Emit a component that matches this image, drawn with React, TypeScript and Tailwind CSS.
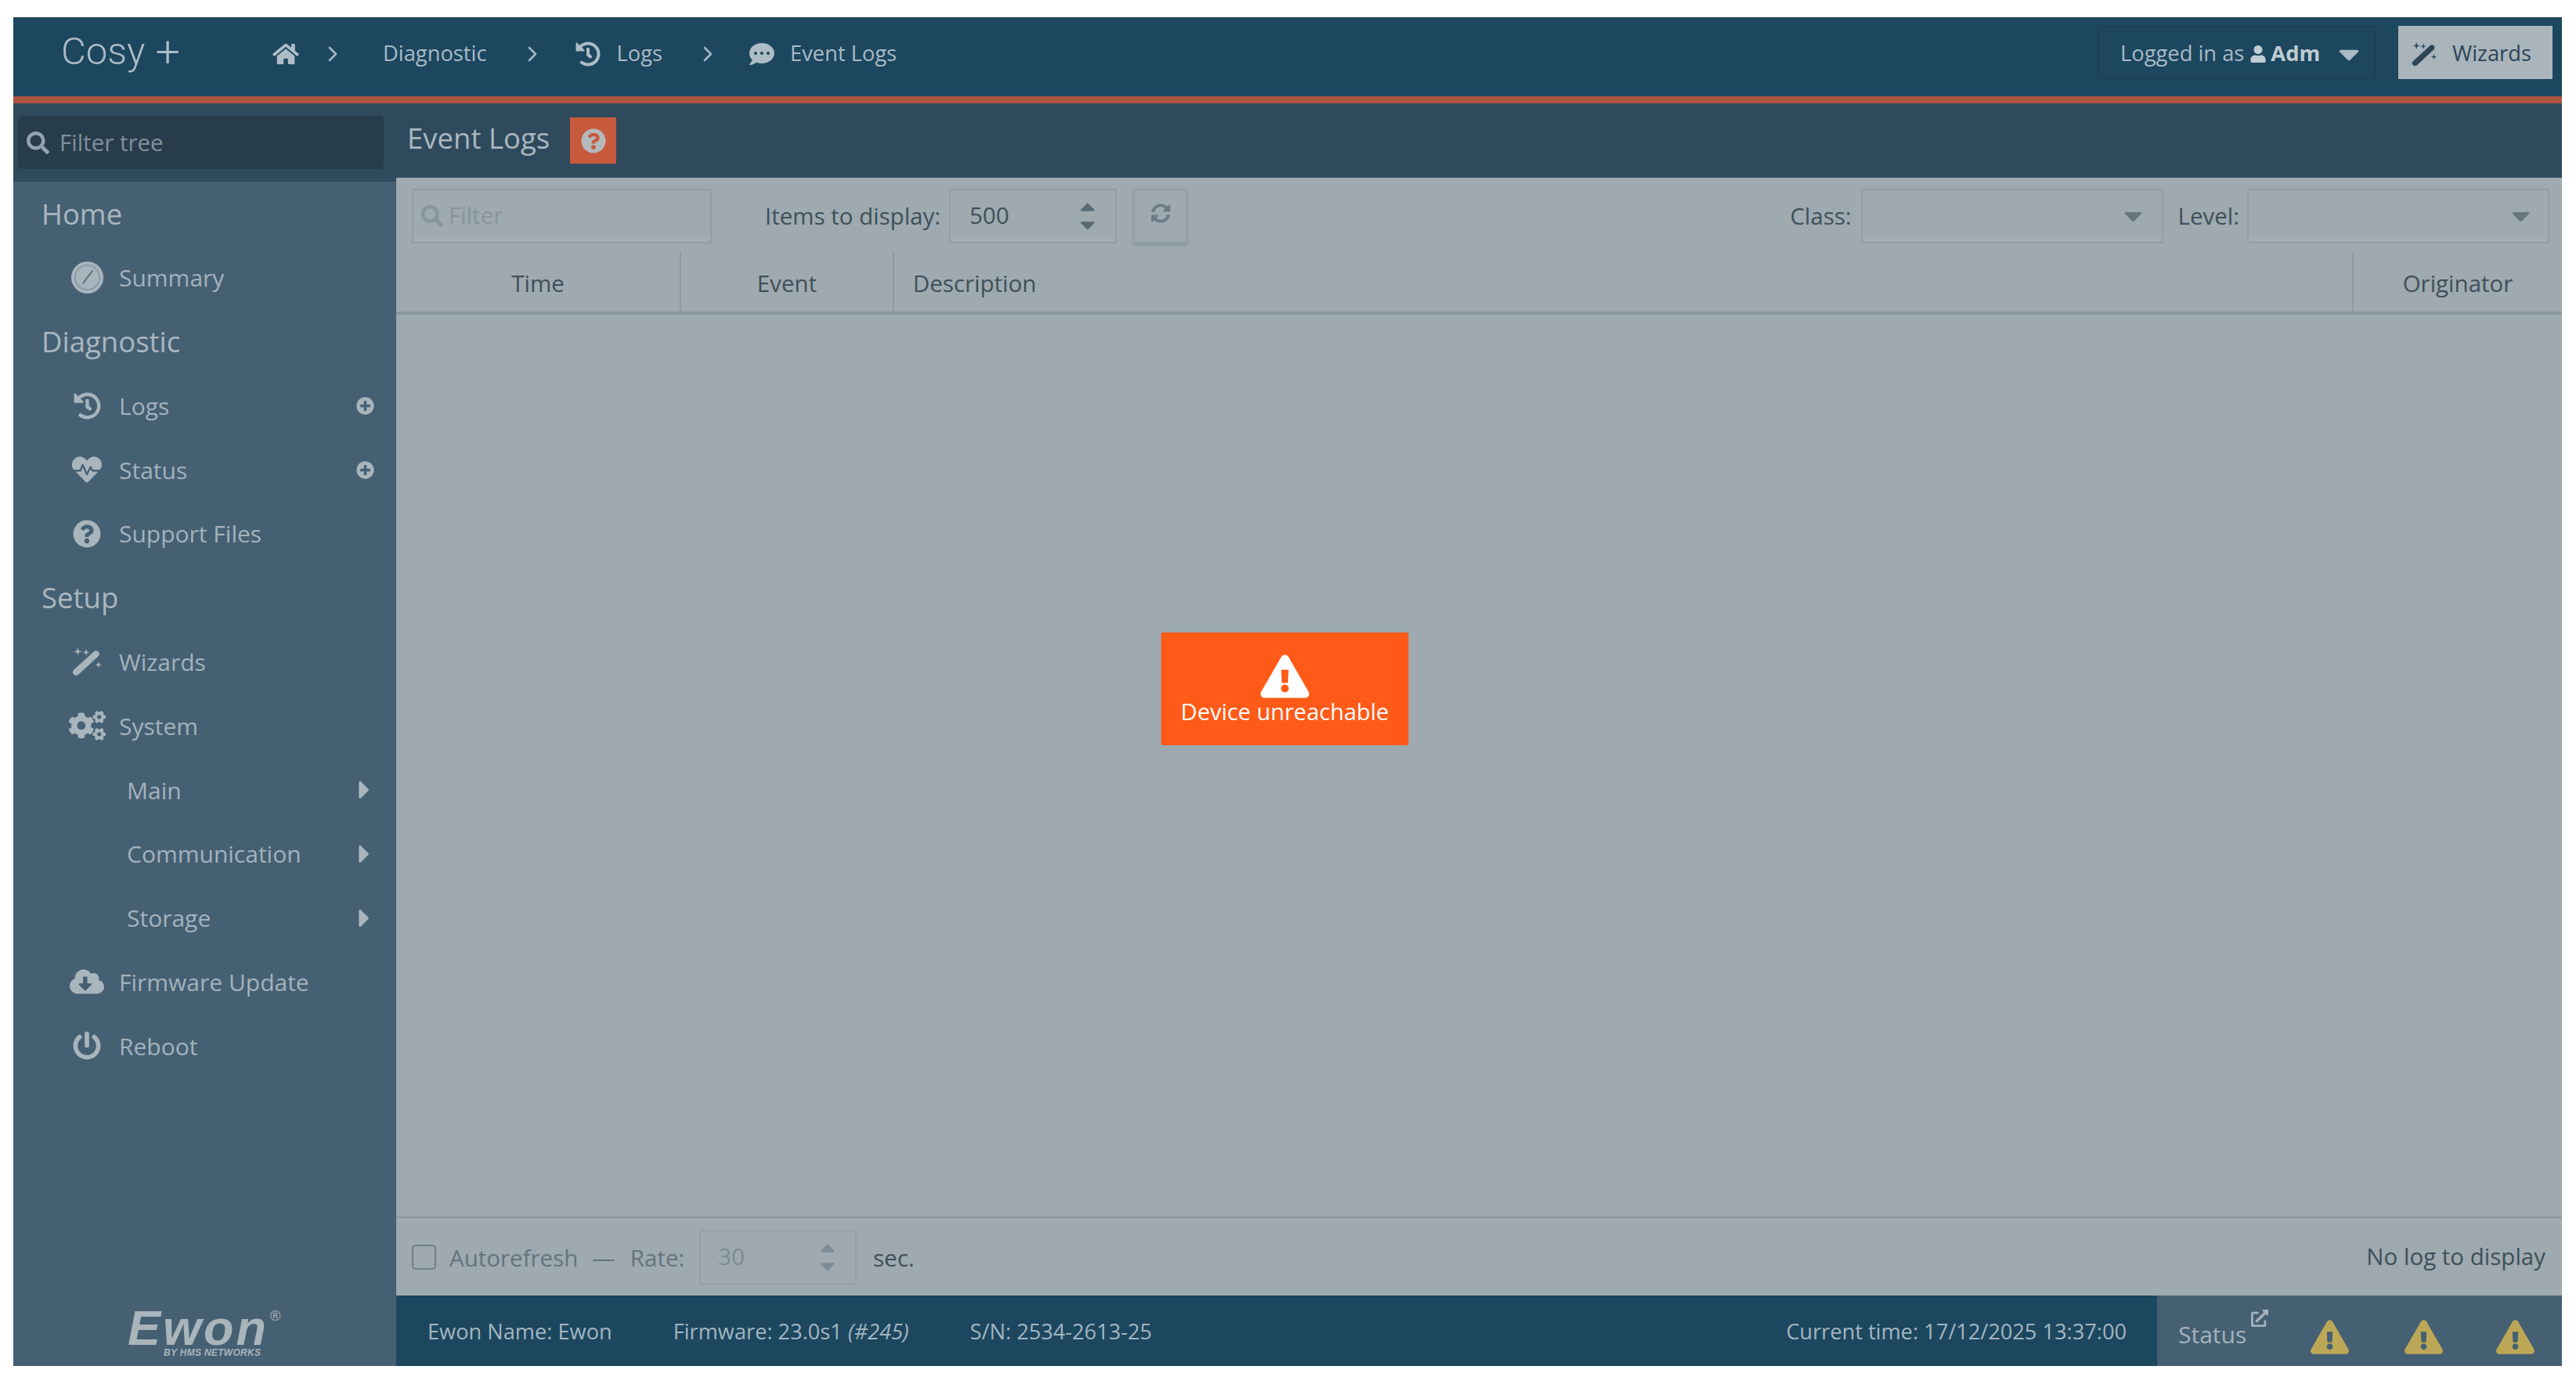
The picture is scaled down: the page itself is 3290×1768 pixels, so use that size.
import React from 'react';
import { ChevronRight } from 'lucide-react';
import {
  FaCaretDown,
  FaCaretRight,
  FaCaretUp,
  FaCloudDownloadAlt,
  FaCogs,
  FaCommentDots,
  FaExclamationTriangle,
  FaExternalLinkAlt,
  FaHeartbeat,
  FaHistory,
  FaHome,
  FaPlusCircle,
  FaPowerOff,
  FaQuestionCircle,
  FaSearch,
  FaSyncAlt,
  FaUser,
} from 'react-icons/fa';

const font = { fontFamily: '"Open Sans", sans-serif' };

const GaugeIcon = () => (
  <svg viewBox="0 0 44 44" className="w-[43px] h-[43px]">
    <circle cx="22" cy="22" r="21" fill="#a8b5bd" />
    <circle cx="22" cy="22" r="16" fill="none" stroke="#8b9aa4" strokeWidth="2" />
    <path d="M16 30 L29 13" stroke="#5d7383" strokeWidth="2" />
  </svg>
);

// fa4 style wand, the one in react-icons is too fat
const WandIcon = ({ className }: { className: string }) => (
  <svg viewBox="0 0 36 36" className={className} fill="currentColor">
    <path d="M5 31 L29 9" stroke="currentColor" strokeWidth="8" strokeLinecap="round" />
    <path d="M7 1 L8.2 5 L12 6 L8.2 7.2 L7 11 L5.8 7.2 L2 6 L5.8 5 Z" />
    <path d="M17 3 L18 6 L21 7 L18 8 L17 11 L16 8 L13 7 L16 6 Z" />
    <path d="M32 18 L33 21 L36 22 L33 23 L32 26 L31 23 L28 22 L31 21 Z" />
  </svg>
);

const Crumb = ({ className }: { className: string }) => (
  <ChevronRight className={`w-[32px] h-[32px] text-[#a3b5c0] ${className}`} strokeWidth={2} />
);

const Section = ({ label }: { label: string }) => (
  <div className="h-[81.8px] pl-[36px] flex items-center text-[36.5px] text-[#a9b7c0]">{label}</div>
);

const Item = ({ icon, label, plus }: { icon: React.ReactNode; label: string; plus?: boolean }) => (
  <div className="h-[81.8px] pl-[64px] pr-[28px] flex items-center text-[30px] text-[#a3b2bc]">
    <div className="w-[60px] flex justify-center text-[#a8b5bd]">{icon}</div>
    <span className="ml-[11px]">{label}</span>
    {plus && <FaPlusCircle className="ml-auto w-[23px] h-[23px] text-[#a8b5bd]" />}
  </div>
);

const SubItem = ({ label }: { label: string }) => (
  <div className="h-[81.8px] pl-[145px] pr-[33px] flex items-center text-[30px] text-[#a3b2bc]">
    <span>{label}</span>
    <FaCaretRight className="ml-auto w-[15px] h-[38px] text-[#a8b5bd]" />
  </div>
);

const Spinner = ({ color }: { color: string }) => (
  <div className="absolute right-[20px] flex flex-col items-center" style={{ color }}>
    <FaCaretUp className="w-[30px] h-[30px]" />
    <FaCaretDown className="w-[30px] h-[30px] -mt-[7px]" />
  </div>
);

const Warn = ({ className }: { className: string }) => (
  <FaExclamationTriangle className={`w-[49px] h-[46px] mt-[16px] text-[#bba756] ${className}`} />
);

const inputBox = 'h-[70px] border-2 border-[#919da4] rounded-[2px] shadow-[inset_0_-8px_0_#a2adb4]';

export default function App() {
  return (
    <div className="w-[3290px] h-[1768px] bg-white pl-[17px] pr-[18px] pt-[22px] pb-[23px] flex flex-col overflow-hidden" style={font}>
      {/* top bar */}
      <header className="h-[110px] shrink-0 bg-[#1c475f] border-b-[9px] border-[#ae5340] flex items-center pl-[61px] pr-[12px] pb-[8px] text-[#a9bac5] text-[27.3px]">
        <div className="w-[270px] flex items-center text-[49px] font-light text-[#adbcc6] leading-none -mt-[6px]" style={{ fontFamily: 'Roboto, sans-serif' }}>
          <span>Cosy</span>
          <span className="ml-[13px] text-[56px] leading-none">+</span>
        </div>
        <FaHome className="w-[34px] h-[30px] text-[#adbcc6]" />
        <Crumb className="ml-[27px]" />
        <span className="ml-[48px]">Diagnostic</span>
        <Crumb className="ml-[42px]" />
        <FaHistory className="ml-[38px] w-[34px] h-[32px] text-[#adbcc6]" />
        <span className="ml-[20px]">Logs</span>
        <Crumb className="ml-[42px]" />
        <FaCommentDots className="ml-[34px] w-[38px] h-[32px] text-[#adbcc6]" />
        <span className="ml-[17px]">Event Logs</span>

        <div className="ml-auto -mt-[4px] w-[355px] h-[68px] border-2 border-[#1a4057] rounded-[3px] flex items-center pl-[27px] pt-[4px]">
          <span>Logged in as</span>
          <FaUser className="ml-[8px] w-[20px] h-[22px] text-[#c0ccd3]" />
          <span className="ml-[6px] font-bold text-[#c0ccd3]">Adm</span>
          <FaCaretDown className="ml-[16px] w-[42px] h-[42px]" />
        </div>
        <div className="ml-[29px] -mt-[4px] w-[197px] h-[68px] bg-[#a9b4bb] flex items-center pl-[17px] pt-[4px] text-[#2d4657]">
          <WandIcon className="w-[32px] h-[32px]" />
          <span className="ml-[20px]">Wizards</span>
        </div>
      </header>

      <div className="flex-1 flex min-h-0">
        {/* sidebar */}
        <aside className="w-[489px] shrink-0 bg-[#466073] flex flex-col">
          <div className="h-[100px] shrink-0 bg-[#2f4a5c] pl-[6px] pr-[16px] pt-[16px]">
            <div className="h-[68px] bg-[#283d4b] rounded-[6px] flex items-center pl-[11px] text-[29.5px] text-[#7f909b]">
              <FaSearch className="w-[29px] h-[29px] text-[#93a4af]" />
              <span className="ml-[13px]">Filter tree</span>
            </div>
          </div>
          <Section label="Home" />
          <Item icon={<GaugeIcon />} label="Summary" />
          <Section label="Diagnostic" />
          <Item icon={<FaHistory className="w-[35px] h-[35px]" />} label="Logs" plus />
          <Item icon={<FaHeartbeat className="w-[42px] h-[38px]" />} label="Status" plus />
          <Item icon={<FaQuestionCircle className="w-[36px] h-[36px]" />} label="Support Files" />
          <Section label="Setup" />
          <Item icon={<WandIcon className="w-[38px] h-[38px]" />} label="Wizards" />
          <Item icon={<FaCogs className="w-[47px] h-[38px]" />} label="System" />
          <SubItem label="Main" />
          <SubItem label="Communication" />
          <SubItem label="Storage" />
          <Item icon={<FaCloudDownloadAlt className="w-[44px] h-[36px]" />} label="Firmware Update" />
          <Item icon={<FaPowerOff className="w-[36px] h-[38px]" />} label="Reboot" />
          <div className="mt-auto mb-[11px] ml-[146px] relative text-[#a9b4bb]" style={{ fontFamily: '"Liberation Sans", sans-serif' }}>
            <div className="text-[63px] font-bold italic leading-[52px] tracking-[3px]">Ewon</div>
            <div className="text-[12px] font-bold italic leading-[12px] pl-[46px] tracking-[0.3px]">BY HMS NETWORKS</div>
            <span className="absolute left-[182px] top-[2px] text-[18px] leading-none">®</span>
          </div>
        </aside>

        {/* main */}
        <main className="flex-1 min-w-0 flex flex-col relative">
          <div className="h-[95px] shrink-0 bg-[#2f4a5c] flex items-center pl-[14px]">
            <h1 className="text-[36.5px] text-[#a9b7c0] font-normal pb-[6px]">Event Logs</h1>
            <div className="ml-[26px] w-[59px] h-[59px] bg-[#c75a3d] flex items-center justify-center">
              <FaQuestionCircle className="w-[32px] h-[32px] text-[#b4b9bb]" />
            </div>
          </div>

          <div className="flex-1 min-h-0 bg-[#9ea9b0] flex flex-col text-[29.5px] text-[#3f5059]">
            <div className="h-[95px] shrink-0 flex items-center pl-[20px] pt-[2px]">
              <div className={`w-[383px] ${inputBox} flex items-center pl-[10px] text-[#86949c]`}>
                <FaSearch className="w-[28px] h-[28px]" />
                <span className="ml-[7px]">Filter</span>
              </div>
              <span className="ml-[68px] mt-[2px]">Items to display:</span>
              <div className={`ml-[11px] w-[214px] ${inputBox} flex items-center pl-[24px] relative`}>
                <span>500</span>
                <Spinner color="#5a6a74" />
              </div>
              <div className="ml-[21px] w-[70px] h-[70px] border-2 border-[#919da4] rounded-[3px] shadow-[0_3px_3px_#8a979e] flex items-center justify-center pb-[6px]">
                <FaSyncAlt className="w-[25px] h-[25px] text-[#6b7a84]" />
              </div>
              <span className="ml-auto mt-[2px]">Class:</span>
              <div className={`ml-[12px] w-[386px] ${inputBox} flex items-center justify-end pr-[18px]`}>
                <FaCaretDown className="w-[37px] h-[37px] text-[#66757e]" />
              </div>
              <span className="ml-[19px] mt-[2px]">Level:</span>
              <div className={`ml-[10px] mr-[16px] w-[386px] ${inputBox} flex items-center justify-end pr-[16px]`}>
                <FaCaretDown className="w-[37px] h-[37px] text-[#66757e]" />
              </div>
            </div>

            <div className="h-[80px] shrink-0 flex border-b-4 border-[#8a979e]">
              <div className="w-[362px] flex items-center justify-center pt-[5px]">Time</div>
              <div className="w-[272px] flex items-center justify-center pt-[5px] border-l-2 border-[#8e9aa1]">Event</div>
              <div className="flex-1 flex items-center pl-[24px] pt-[5px] border-l-2 border-[#8e9aa1]">Description</div>
              <div className="w-[268px] flex items-center justify-center pt-[5px] border-l-2 border-[#8e9aa1]">Originator</div>
            </div>

            <div className="flex-1 min-h-0 border-b-2 border-[#8a979e]" />

            <div className="h-[99px] shrink-0 flex items-center pl-[20px] pr-[21px]">
              <div className="w-[31px] h-[32px] border-2 border-[#6f7f89] rounded-[5px]" />
              <span className="ml-[17px] mt-[3px] text-[#64747e]">Autorefresh</span>
              <span className="ml-[18px] mt-[3px] text-[#64747e]">—</span>
              <span className="ml-[19px] mt-[3px] text-[#64747e]">Rate:</span>
              <div className="ml-[19px] w-[201px] h-[70px] border-2 border-[#95a1a8] rounded-[2px] flex items-center pl-[22px] relative text-[#7d8b94]">
                <span>30</span>
                <Spinner color="#7d8b94" />
              </div>
              <span className="ml-[21px] mt-[3px]">sec.</span>
              <span className="ml-auto">No log to display</span>
            </div>
          </div>

          <footer className="h-[90px] shrink-0 bg-[#1c475f] flex items-center pl-[40px] text-[27.2px] text-[#a3b5c0]">
            <span className="mt-[3px]">Ewon Name: Ewon</span>
            <span className="ml-[78px] mt-[3px]">Firmware: 23.0s1 <em>(#245)</em></span>
            <span className="ml-[78px] mt-[3px]">S/N: 2534-2613-25</span>
            <span className="ml-auto mr-[39px] mt-[3px]">Current time: 17/12/2025 13:37:00</span>
            <div className="w-[517px] h-full bg-[#466073] flex items-center pl-[27px] text-[#a3b2bc]">
              <span className="mt-[8px] text-[30px]">Status</span>
              <FaExternalLinkAlt className="ml-[5px] mb-[32px] w-[24px] h-[22px]" />
              <Warn className="ml-[53px]" />
              <Warn className="ml-[71px]" />
              <Warn className="ml-[68px]" />
            </div>
          </footer>

          {/* device lost toast */}
          <div className="absolute left-[977px] top-[676px] w-[316px] h-[144px] bg-[#ff5a17] rounded-[2px] flex flex-col items-center text-white">
            <FaExclamationTriangle className="mt-[28px] w-[62px] h-[56px]" />
            <span className="-mt-[1px] text-[29px] leading-[36px]">Device unreachable</span>
          </div>
        </main>
      </div>
    </div>
  );
}
